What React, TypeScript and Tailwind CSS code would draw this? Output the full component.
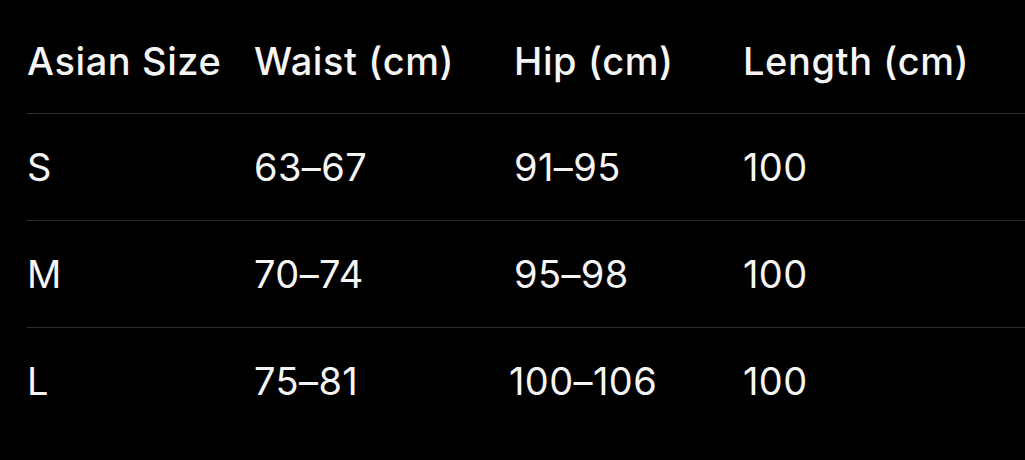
const rows = [
  { size: "S", waist: "63–67", hip: "91–95", length: "100" },
  { size: "M", waist: "70–74", hip: "95–98", length: "100" },
  { size: "L", waist: "75–81", hip: "100–106", length: "100" },
];

export default function App() {
  return (
    <section
      className="h-[460px] w-full bg-black pl-[27px] pt-[10px] text-[#f5f5f5]"
      style={{ fontFamily: "Inter, 'Noto Sans', sans-serif" }}
    >
      <div className="grid h-[103px] grid-cols-[227px_260px_229px_1fr] items-center text-[38px] font-medium tracking-[0.6px]">
        <div>Asian Size</div>
        <div>Waist (cm)</div>
        <div>Hip (cm)</div>
        <div>Length (cm)</div>
      </div>
      {rows.map((r) => (
        <div
          className="grid h-[107px] grid-cols-[227px_260px_229px_1fr] items-center border-t border-[#2e2e2e] text-[38px] font-normal tracking-[0.4px]"
          key={r.size}
        >
          <div>{r.size}</div>
          <div>{r.waist}</div>
          <div className={r.hip.length > 5 ? "-ml-[5px]" : ""}>{r.hip}</div>
          <div>{r.length}</div>
        </div>
      ))}
    </section>
  );
}
